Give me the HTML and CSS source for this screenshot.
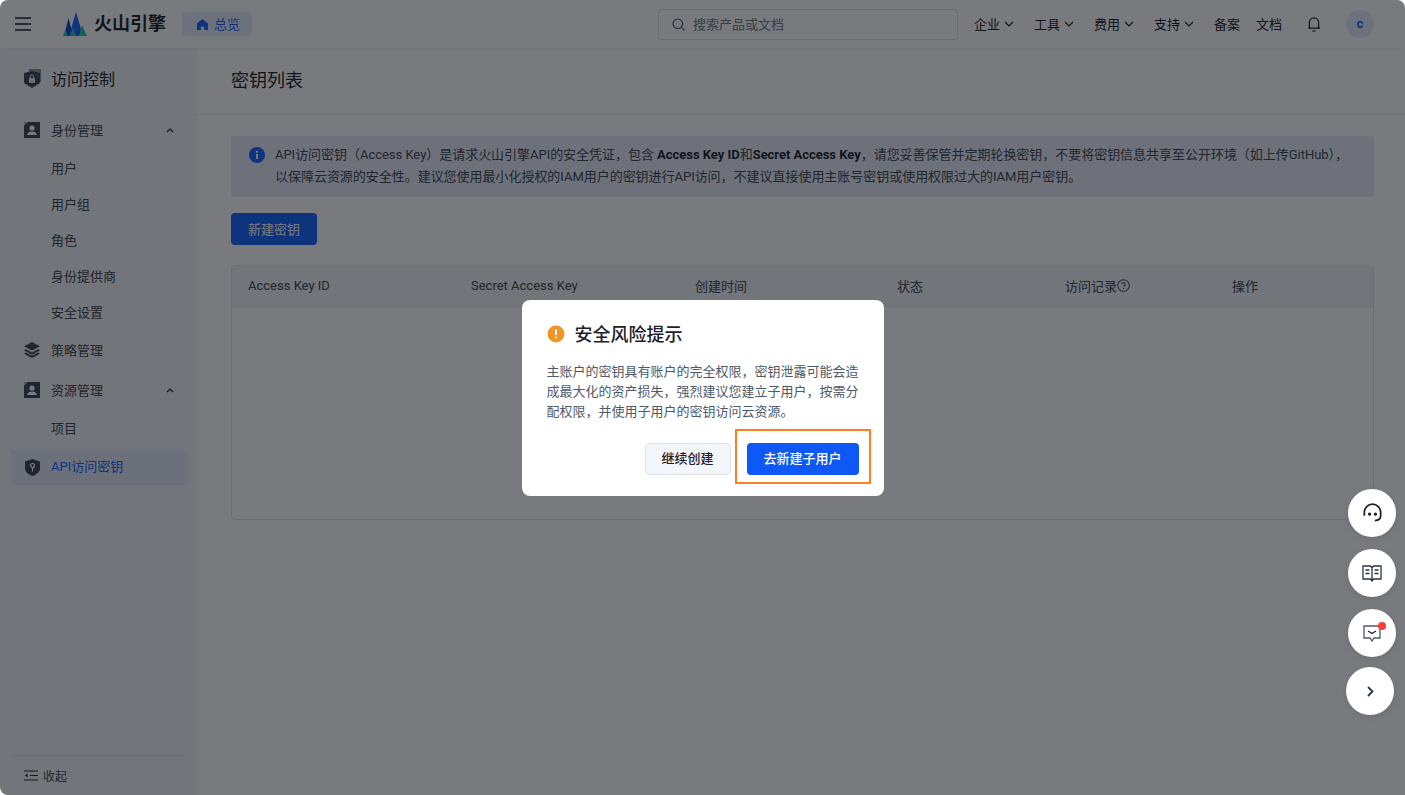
FILE: index.html
```html
<!DOCTYPE html>
<html lang="zh-CN">
<head>
    <meta charset="UTF-8">
    <title>密钥列表</title>
    <link rel="stylesheet" href="styles.css">
</head>
<body>
    <div class="app">
        <header class="topbar">
            <svg class="burger" width="16" height="14" viewBox="0 0 16 14"><path d="M0 1h16M0 7h16M0 13h16" stroke="#1d2129" stroke-width="1.4" fill="none"/></svg>
            <div class="logo">
                <svg width="24" height="24" viewBox="0 0 24 24">
                    <path d="M1 24 5.500 6 10 24z" fill="#1348c8"/>
                    <path d="M6 24 13 0l7 24z" fill="#1664ff"/>
                    <path d="M0 24 2.500 17 4.500 24z" fill="#1fc6b4"/>
                    <path d="M7 24 10 15l3 9z" fill="#1fc6b4"/>
                    <path d="M16 24 19 13l5 11z" fill="#1fc6b4"/>
                </svg>
                <span class="logo-text">火山引擎</span>
            </div>
            <div class="home-chip">
                <svg width="11" height="11" viewBox="0 0 11 11"><path d="M5.500 0 11 4.600V11H7.200V7.400H3.800V11H0V4.600z" fill="#1664ff"/></svg>
                <span>总览</span>
            </div>
            <div class="search">
                <svg width="13" height="13" viewBox="0 0 13 13" fill="none" stroke="#4e5969" stroke-width="1.200"><circle cx="5.800" cy="5.800" r="4.800"/><path d="m9.400 9.400 3 3"/></svg>
                <span>搜索产品或文档</span>
            </div>
            <nav class="topnav">
                <div class="nav-item">企业<svg class="caret" width="10" height="6" viewBox="0 0 10 6"><path d="m1 1 4 4 4-4" stroke="#1d2129" stroke-width="1.200" fill="none"/></svg></div>
                <div class="nav-item">工具<svg class="caret" width="10" height="6" viewBox="0 0 10 6"><path d="m1 1 4 4 4-4" stroke="#1d2129" stroke-width="1.200" fill="none"/></svg></div>
                <div class="nav-item">费用<svg class="caret" width="10" height="6" viewBox="0 0 10 6"><path d="m1 1 4 4 4-4" stroke="#1d2129" stroke-width="1.200" fill="none"/></svg></div>
                <div class="nav-item">支持<svg class="caret" width="10" height="6" viewBox="0 0 10 6"><path d="m1 1 4 4 4-4" stroke="#1d2129" stroke-width="1.200" fill="none"/></svg></div>
                <div class="nav-plain">备案</div>
                <div class="nav-plain">文档</div>
            </nav>
            <svg class="bell" width="14" height="16" viewBox="0 0 14 16" fill="none" stroke="#1d2129" stroke-width="1.200"><path d="M1 12.200h12M2.400 12.200V6.400a4.600 4.600 0 0 1 9.200 0v5.800"/><path d="M5 15h4"/></svg>
            <div class="avatar">c</div>
        </header>
        <div class="layout">
            <aside class="sidebar">
                <div class="side-title">
                    <svg width="17" height="20" viewBox="0 0 17 20"><path d="M5 0h12v13H5z" fill="#8d94a0"/><path d="M0 4 8 2l8 2v10l-8 5-8-5z" fill="#3d4656"/><path d="M5 9h6v5H5z" fill="#e5e6eb"/><path d="M6.300 9V7.600a1.700 1.700 0 0 1 3.400 0V9" stroke="#e5e6eb" stroke-width="1" fill="none"/></svg>
                    <span>访问控制</span>
                </div>
                <div class="side-group">
                    <svg width="16" height="16" viewBox="0 0 16 16"><path d="M0 0h16v16H0z" fill="#3d4656"/><path d="M0 0h4L0 4z" fill="#a9aeb8"/><circle cx="8" cy="6" r="2.600" fill="#fff"/><path d="M3 13c.6-2.600 2.600-3.600 5-3.600s4.400 1 5 3.600z" fill="#fff"/></svg>
                    <span class="grow">身份管理</span>
                    <svg width="8" height="5" viewBox="0 0 8 5"><path d="m1 4 3-3 3 3" stroke="#1d2129" stroke-width="1.200" fill="none"/></svg>
                </div>
                <div class="side-link">用户</div>
                <div class="side-link">用户组</div>
                <div class="side-link">角色</div>
                <div class="side-link">身份提供商</div>
                <div class="side-link">安全设置</div>
                <div class="side-group policy">
                    <svg width="16" height="16" viewBox="0 0 16 16"><path d="M8 0l8 4.200-8 4.200-8-4.200z" fill="#3d4656"/><path d="M1.800 7.200 8 10.400l6.200-3.200L16 8.500 8 12.700 0 8.500zM1.800 10.500 8 13.700l6.200-3.200 1.800 1.300L8 16l-8-4.200z" fill="#3d4656"/></svg>
                    <span class="grow">策略管理</span>
                </div>
                <div class="side-group res">
                    <svg width="16" height="16" viewBox="0 0 16 16"><path d="M0 0h16v16H0z" fill="#3d4656"/><path d="M0 0h4L0 4z" fill="#a9aeb8"/><circle cx="8" cy="6" r="2.600" fill="#fff"/><path d="M3 13c.6-2.600 2.600-3.600 5-3.600s4.400 1 5 3.600z" fill="#fff"/></svg>
                    <span class="grow">资源管理</span>
                    <svg width="8" height="5" viewBox="0 0 8 5"><path d="m1 4 3-3 3 3" stroke="#1d2129" stroke-width="1.200" fill="none"/></svg>
                </div>
                <div class="side-link">项目</div>
                <div class="side-active">
                    <svg width="15" height="17" viewBox="0 0 15 17"><path d="M7.500 0 15 2.500v7c0 3.500-3.500 6-7.500 7.500C3.500 15.500 0 13 0 9.500v-7z" fill="#3d4656"/><circle cx="7.500" cy="6.500" r="2" fill="none" stroke="#fff" stroke-width="1.200"/><path d="M7.500 8.500v4" stroke="#fff" stroke-width="1.200"/></svg>
                    <span>API访问密钥</span>
                </div>
                <div class="side-foot">
                    <svg width="14" height="11" viewBox="0 0 14 11" fill="none" stroke="#1d2129" stroke-width="1.100"><path d="M0 1h14M6 5.500h8M0 10h14"/><path d="M3.500 3.500v4L1 5.500z" fill="#1d2129" stroke="none"/></svg>
                    <span>收起</span>
                </div>
            </aside>
            <main class="content">
                <div class="page-title">密钥列表</div>
                <div class="page-body">
                    <div class="notice">
                        <svg class="notice-icon" width="16" height="16" viewBox="0 0 16 16"><circle cx="8" cy="8" r="8" fill="#1664ff"/><path d="M7 7h2v5H7z" fill="#fff"/><circle cx="8" cy="4.800" r="1.100" fill="#fff"/></svg>
                        <p>API访问密钥（Access Key）是请求火山引擎API的安全凭证，包含 <b>Access Key ID</b>和<b>Secret Access Key</b>，请您妥善保管并定期轮换密钥，不要将密钥信息共享至公开环境（如上传GitHub），以保障云资源的安全性。建议您使用最小化授权的IAM用户的密钥进行API访问，不建议直接使用主账号密钥或使用权限过大的IAM用户密钥。</p>
                    </div>
                    <button class="btn-new">新建密钥</button>
                    <div class="table">
                        <div class="table-head">
                            <div>Access Key ID</div>
                            <div>Secret Access Key</div>
                            <div>创建时间</div>
                            <div>状态</div>
                            <div class="with-help">访问记录<svg width="13" height="13" viewBox="0 0 13 13" fill="none" stroke="#4e5969" stroke-width="1.100"><circle cx="6.500" cy="6.500" r="5.800"/><path d="M4.800 5.200a1.700 1.700 0 1 1 2.600 1.400c-.6.400-.9.700-.9 1.300"/><path d="M6.500 9v1"/></svg></div>
                            <div>操作</div>
                        </div>
                        <div class="table-body"></div>
                    </div>
                </div>
            </main>
        </div>
    </div>

    <div class="mask">
        <div class="modal">
            <div class="modal-title">
                <svg width="18" height="18" viewBox="0 0 18 18"><circle cx="9" cy="9" r="8.500" fill="#ee9526"/><path d="M8 4.500h2v5.500H8z" fill="#fff"/><circle cx="9" cy="12.500" r="1.100" fill="#fff"/></svg>
                <span>安全风险提示</span>
            </div>
            <p class="modal-text">主账户的密钥具有账户的完全权限，密钥泄露可能会造成最大化的资产损失，强烈建议您建立子用户，按需分配权限，并使用子用户的密钥访问云资源。</p>
            <div class="modal-actions">
                <button class="btn-plain">继续创建</button>
                <button class="btn-primary">去新建子用户</button>
            </div>
            <div class="highlight"></div>
        </div>
    </div>

    <div class="float-btn fb-1">
        <svg width="21" height="21" viewBox="0 0 18 18" fill="none" stroke="#1d2129" stroke-width="1.500"><path d="M2 11V8a7 7 0 0 1 14 0v3c0 2.500-2 4-5 4"/><circle cx="6.500" cy="9.500" r=".7" fill="#1d2129"/><circle cx="11.500" cy="9.500" r=".7" fill="#1d2129"/></svg>
    </div>
    <div class="float-btn fb-2">
        <svg width="20" height="17" viewBox="0 0 20 17" fill="none" stroke="#2b3441" stroke-width="1.300"><path d="M10 3 8.500 1H1v13h7.500L10 16l1.500-2H19V1h-7.500zM10 3v13"/><path d="M3.500 5h4M3.500 8.500h4M12.500 5h4M12.500 8.500h4"/></svg>
    </div>
    <div class="float-btn fb-3">
        <svg width="18" height="17" viewBox="0 0 18 17" fill="none" stroke="#4e5969" stroke-width="1.300"><path d="M1 1h16v12h-6l-2 3-2-3H1z"/><path d="m5 6 4 2.500L13 6" stroke="#1d2129"/></svg>
        <span class="dot"></span>
    </div>
    <div class="float-btn fb-4">
        <svg width="7" height="11" viewBox="0 0 7 11"><path d="m1 1 4.500 4.500L1 10" stroke="#2b3441" stroke-width="1.800" fill="none"/></svg>
    </div>
</body>
</html>
```

FILE: styles.css
```css
* {
    box-sizing: border-box;
}
html {
    background: #fff;
}
body {
    margin: 0;
    height: 795px;
    overflow: hidden;
    font-family: Roboto, "Noto Sans CJK SC", sans-serif;
    font-size: 13px;
    color: #1d2129;
}
svg {
    flex: none;
    display: block;
}
.app {
    height: 795px;
    display: flex;
    flex-direction: column;
    background: #fff;
    border-radius: 8px 8px 0 8px;
    overflow: hidden;
}

/* top bar */
.topbar {
    height: 48px;
    flex: none;
    display: flex;
    align-items: center;
    padding: 0 31px 0 15px;
    background: #fff;
    box-shadow: 0 1px 4px rgba(0, 0, 0, 0.06);
    z-index: 2;
}
.logo {
    display: flex;
    align-items: center;
    gap: 7px;
    margin-left: 32px;
}
.logo-text {
    width: 72px;
    font-size: 18px;
    font-weight: 700;
    line-height: 24px;
    color: #1d2129;
    white-space: nowrap;
}
.home-chip {
    display: flex;
    align-items: center;
    gap: 6px;
    width: 70px;
    height: 24px;
    margin-left: 16px;
    padding-left: 15px;
    background: #e6ebfa;
    border-radius: 4px;
    color: #1664ff;
}
.home-chip span,
.search span {
    padding-bottom: 2px;
}
.search {
    display: flex;
    align-items: center;
    gap: 8px;
    width: 300px;
    height: 31px;
    margin-left: auto;
    padding-left: 13px;
    border: 1px solid #dde2e9;
    border-radius: 4px;
    color: #737a87;
}
.topnav {
    display: flex;
    align-items: center;
    gap: 16px;
    margin-left: 16px;
    padding-bottom: 2px;
}
.nav-item {
    display: flex;
    align-items: center;
    gap: 4px;
    margin-right: 4px;
}
.caret {
    margin-top: 2px;
}
.nav-plain {
    color: #1d2129;
}
.bell {
    margin-left: 25px;
}
.avatar {
    width: 28px;
    height: 28px;
    margin-left: 25px;
    border-radius: 50%;
    background: #e6ebfa;
    color: #1664ff;
    font-weight: 700;
    font-size: 13px;
    line-height: 27px;
    text-align: center;
}

/* sidebar */
.layout {
    flex: 1;
    display: flex;
    min-height: 0;
}
.sidebar {
    width: 197px;
    flex: none;
    display: flex;
    flex-direction: column;
    padding: 0 10px 0 11px;
    background: #f2f4f7;
    color: #41464f;
}
.side-title {
    display: flex;
    align-items: center;
    gap: 10px;
    height: 62px;
    padding-left: 13px;
    font-size: 16px;
    font-weight: 400;
    color: #1d2129;
}
.side-title span {
    padding-bottom: 2px;
}
.side-group {
    display: flex;
    align-items: center;
    gap: 11px;
    height: 36px;
    padding: 0 13px;
    margin-top: 2px;
    margin-bottom: 2px;
}
.side-group.policy {
    margin-top: 2px;
    margin-bottom: 0;
}
.side-group.res {
    margin-top: 4px;
}
.side-group span {
    padding-bottom: 1px;
}
.grow {
    flex: 1;
}
.side-link {
    height: 36px;
    line-height: 38px;
    padding-left: 40px;
}
.side-active {
    display: flex;
    align-items: center;
    gap: 11px;
    height: 36px;
    margin-top: 3px;
    padding-left: 14px;
    background: #e4e9f8;
    border-radius: 4px;
    color: #1664ff;
}
.side-active span {
    padding-bottom: 4px;
}
.side-foot {
    margin-top: auto;
    height: 40px;
    display: flex;
    align-items: center;
    gap: 5px;
    padding-left: 13px;
    border-top: 1px solid #e4e7ec;
    font-size: 12px;
}

/* main */
.content {
    flex: 1;
    min-width: 0;
}
.page-title {
    height: 67px;
    padding-left: 34px;
    line-height: 65px;
    font-size: 18px;
    font-weight: 400;
    border-bottom: 1px solid #eceef1;
}
.page-body {
    padding: 21px 31px 0 34px;
}
.notice {
    display: flex;
    gap: 10px;
    height: 61px;
    padding: 8px 16px 0 18px;
    background: #e8ebf9;
    border-radius: 4px;
}
.notice-icon {
    margin-top: 3px;
}
.notice p {
    margin: 0;
    line-height: 22px;
    letter-spacing: -0.03px;
    color: #41464f;
}
.notice b {
    font-weight: 700;
    color: #1d2129;
}
.btn-new {
    display: block;
    width: 86px;
    height: 32px;
    margin-top: 16px;
    padding: 0 0 2px;
    border: none;
    border-radius: 4px;
    background: #1664ff;
    color: #fff;
    font: inherit;
}
.table {
    margin-top: 20px;
    border: 1px solid #e4e7ec;
    border-radius: 4px;
}
.table-head {
    display: grid;
    grid-template-columns: 223px 224px 202px 168px 167px 1fr;
    height: 41px;
    align-items: center;
    padding: 0 0 2px 16px;
    background: #f2f4f8;
    border-bottom: 1px solid #e4e7ec;
    color: #41464f;
}
.with-help {
    display: flex;
    align-items: center;
}
.table-body {
    height: 212px;
}

/* dialog */
.mask {
    position: fixed;
    inset: 0;
    z-index: 10;
    display: flex;
    align-items: center;
    justify-content: center;
    background: rgba(10, 12, 18, 0.55);
    border-radius: 8px 8px 0 8px;
}
.modal {
    position: relative;
    width: 362px;
    height: 196px;
    padding: 21px 25px 0;
    background: #fff;
    border-radius: 8px;
}
.modal-title {
    display: flex;
    align-items: center;
    gap: 10px;
    height: 26px;
    font-size: 18px;
    font-weight: 500;
}
.modal-title span {
    padding-bottom: 2px;
}
.modal-text {
    margin: 15px 0 0;
    width: 312px;
    line-height: 20px;
    color: #4e5969;
}
.modal-actions {
    display: flex;
    justify-content: flex-end;
    gap: 16px;
    margin-top: 21px;
}
.btn-plain,
.btn-primary {
    height: 32px;
    padding: 0 0 2px;
    border-radius: 4px;
    font: inherit;
}
.btn-plain {
    width: 86px;
    background: #f3f6fa;
    border: 1px solid #dde2e9;
    color: #1d2129;
    font-weight: 500;
}
.btn-primary {
    width: 112px;
    background: #0e58f5;
    border: none;
    color: #fff;
    font-weight: 500;
}
.highlight {
    position: absolute;
    left: 213px;
    top: 129px;
    width: 136px;
    height: 55px;
    border: 2px solid #ff7d24;
}

/* floating buttons */
.float-btn {
    position: fixed;
    z-index: 20;
    width: 48px;
    height: 48px;
    left: 1348px;
    display: flex;
    align-items: center;
    justify-content: center;
    background: #fff;
    border-radius: 50%;
    box-shadow: 0 2px 6px rgba(0, 0, 0, 0.1);
}
.fb-1 {
    top: 489px;
}
.fb-2 {
    top: 549px;
}
.fb-3 {
    top: 609px;
}
.fb-4 {
    top: 667px;
    left: 1346px;
}
.dot {
    position: absolute;
    top: 13px;
    right: 10px;
    width: 8px;
    height: 8px;
    border-radius: 50%;
    background: #f53f3f;
}
```
